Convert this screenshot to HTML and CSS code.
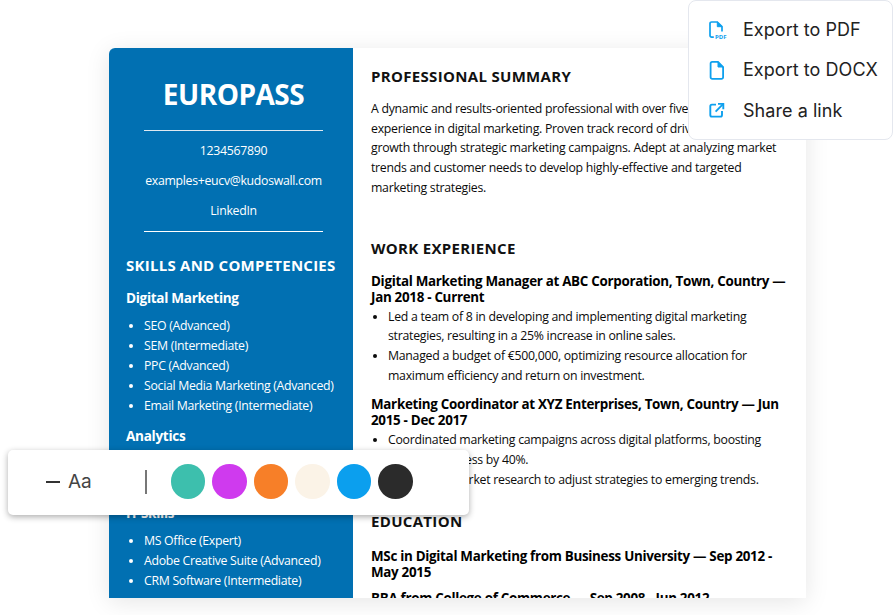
FILE: index.html
```html
<!DOCTYPE html>
<html lang="en">
<head>
<meta charset="utf-8">
<title>Europass CV</title>
<link rel="stylesheet" href="styles.css">
</head>
<body>
<div class="stage">
  <div class="cv">
    <aside class="side">
      <h1 class="name">EUROPASS</h1>
      <div class="contact">
        <p>1234567890</p>
        <p>examples+eucv@kudoswall.com</p>
        <p>LinkedIn</p>
      </div>
      <h2 class="side-title">SKILLS AND COMPETENCIES</h2>
      <h3 class="side-sub">Digital Marketing</h3>
      <ul class="side-list">
        <li>SEO (Advanced)</li>
        <li>SEM (Intermediate)</li>
        <li>PPC (Advanced)</li>
        <li>Social Media Marketing (Advanced)</li>
        <li>Email Marketing (Intermediate)</li>
      </ul>
      <h3 class="side-sub">Analytics</h3>
      <ul class="side-list">
        <li>Google Analytics (Expert)</li>
        <li>Data Analysis (Advanced)</li>
      </ul>
      <h3 class="side-sub">IT Skills</h3>
      <ul class="side-list">
        <li>MS Office (Expert)</li>
        <li>Adobe Creative Suite (Advanced)</li>
        <li>CRM Software (Intermediate)</li>
      </ul>
    </aside>
    <main class="body">
      <h2 class="title">PROFESSIONAL SUMMARY</h2>
      <p class="summary">A dynamic and results-oriented professional with over five years of experience in digital marketing. Proven track record of driving business growth through strategic marketing campaigns. Adept at analyzing market trends and customer needs to develop highly-effective and targeted marketing strategies.</p>
      <h2 class="title work">WORK EXPERIENCE</h2>
      <h3 class="job">Digital Marketing Manager at ABC Corporation, Town, Country — Jan 2018 - Current</h3>
      <ul class="list">
        <li>Led a team of 8 in developing and implementing digital marketing strategies, resulting in a 25% increase in online sales.</li>
        <li>Managed a budget of €500,000, optimizing resource allocation for maximum efficiency and return on investment.</li>
      </ul>
      <h3 class="job">Marketing Coordinator at XYZ Enterprises, Town, Country — Jun 2015 - Dec 2017</h3>
      <ul class="list">
        <li>Coordinated marketing campaigns across digital platforms, boosting brand awareness by 40%.</li>
        <li>Conducted market research to adjust strategies to emerging trends.</li>
      </ul>
      <h2 class="title edu">EDUCATION</h2>
      <h3 class="job">MSc in Digital Marketing from Business University — Sep 2012 - May 2015</h3>
      <h3 class="job">BBA from College of Commerce — Sep 2008 - Jun 2012</h3>
    </main>
  </div>

  <div class="menu">
    <div class="menu-item">
      <svg class="menu-icon" viewBox="0 0 20 20" fill="none" stroke="#0EA0EE" stroke-width="1.7"><path d="M6.8 18.2H4.6A1.6 1.6 0 0 1 3 16.6V4.6A1.6 1.6 0 0 1 4.6 3H10.3L15 7.7V12.4"/><path d="M10.3 3V7.7H15Z" fill="#0EA0EE" stroke-width="1"/><text x="8" y="19.6" class="pdf">PDF</text></svg>
      <span>Export to PDF</span>
    </div>
    <div class="menu-item">
      <svg class="menu-icon" viewBox="0 0 20 20" fill="none" stroke="#0EA0EE" stroke-width="1.8"><path d="M5.2 1.9H11L16.1 7V17.2A1.6 1.6 0 0 1 14.5 18.8H5.2A1.6 1.6 0 0 1 3.6 17.2V3.5A1.6 1.6 0 0 1 5.2 1.9Z"/><path d="M11 1.9V7H16.1Z" fill="#0EA0EE" stroke-width="1"/></svg>
      <span>Export to DOCX</span>
    </div>
    <div class="menu-item">
      <svg class="menu-icon" viewBox="0 0 20 20" fill="none" stroke="#0EA0EE" stroke-width="1.9"><path d="M9 4.6H4.9A1.6 1.6 0 0 0 3.3 6.2V15A1.6 1.6 0 0 0 4.9 16.6H13.4A1.6 1.6 0 0 0 15 15V11"/><path d="M8.6 11.6L16 4.2"/><path d="M11 3.9H16.3V9.2"/></svg>
      <span>Share a link</span>
    </div>
  </div>

  <div class="toolbar">
    <span class="dash"></span>
    <span class="aa">Aa</span>
    <span class="sep"></span>
    <div class="swatches">
      <span class="swatch teal"></span>
      <span class="swatch purple"></span>
      <span class="swatch orange"></span>
      <span class="swatch cream"></span>
      <span class="swatch blue"></span>
      <span class="swatch dark"></span>
    </div>
  </div>
</div>
</body>
</html>
```
FILE: styles.css
```css
* { box-sizing: border-box; }
html, body { margin: 0; padding: 0; background: #fff; }
body { width: 893px; height: 615px; overflow: hidden; font-family: "Open Sans", sans-serif; }
.stage { position: relative; width: 893px; height: 615px; overflow: hidden; }
h1, h2, h3, p, ul { margin: 0; padding: 0; }

.cv {
  position: absolute; left: 109px; top: 48px;
  width: 697px; height: 550px;
  display: flex; overflow: hidden;
  border-radius: 6px 0 0 0;
  background: #fff;
  box-shadow: 0 4px 24px rgba(0,0,0,.1);
}
.side {
  width: 244px; flex: none; height: 100%;
  background: #0170B2; color: #fff;
  padding: 28px 12px 0 17px;
}
.name { font-size: 28px; line-height: 37px; font-weight: 700; letter-spacing: -.5px; text-align: center; color: #fff; }
.contact {
  margin: 17px 18px 0; border-top: 1px solid #dfe9f1; border-bottom: 1px solid #fff;
  height: 102px; text-align: center; font-size: 12.3px; letter-spacing: -.3px;
  padding-top: 10px;
  display: flex; flex-direction: column; gap: 10.5px;
}
.contact p { line-height: 19.5px; }
.side-title { margin-top: 23px; font-size: 15px; line-height: 20px; font-weight: 700; letter-spacing: .25px; white-space: nowrap; }
.side-sub { margin-top: 13px; font-size: 13.6px; line-height: 19px; font-weight: 700; letter-spacing: -.32px; }
.side-list { margin-top: 9px; list-style: disc; padding-left: 18px; font-size: 12.3px; line-height: 20px; letter-spacing: -.3px; }
.side-list + .side-sub { margin-top: 9.5px; }

.body { flex: 1; padding: 18px 16px 0 18px; color: #0b0b0b; font-size: 12.3px; line-height: 19.7px; letter-spacing: -.27px; }
.title { font-size: 15px; line-height: 20px; font-weight: 700; letter-spacing: .32px; color: #111; }
.summary { margin-top: 13px; }
.work { margin-top: 40px; }
.edu { margin-top: 22px; }
.job { font-size: 13.4px; line-height: 16px; font-weight: 700; margin-top: 10px; color: #000; letter-spacing: -.3px; }
.work + .job { margin-top: 15px; }
.list { list-style: disc; padding-left: 17px; margin-top: 2px; }
.list + .job { margin-top: 11px; }
.edu + .job { margin-top: 17px; }

.menu {
  position: absolute; left: 688px; top: 0; width: 205px; height: 140px;
  background: #fff; border: 1px solid #e4e7ee; border-radius: 8px;
  padding: 8px 0 0 18px;
  display: flex; flex-direction: column;
  font-family: Inter, sans-serif; font-size: 18px; letter-spacing: .05px; color: #222;
}
.menu-item { display: flex; align-items: center; gap: 16px; height: 40.5px; }
.menu-icon { width: 20px; height: 20px; flex: none; overflow: visible; }
.pdf { font: 700 6px "Open Sans", sans-serif; fill: #0EA0EE; stroke: none; }

.toolbar {
  position: absolute; left: 8px; top: 450px; width: 461px; height: 65px;
  background: #fff; border-radius: 5px;
  box-shadow: 0 2px 6px rgba(0,0,0,.32);
  display: flex; align-items: center;
  padding: 0 0 2px 38px;
}
.dash { width: 14px; height: 2px; background: #333; flex: none; }
.aa { margin-left: 8px; width: 55px; font-family: Inter, sans-serif; font-size: 19px; color: #444; }
.sep { width: 1.5px; height: 24px; background: #777; margin-left: 22px; flex: none; }
.swatches { display: flex; gap: 7px; margin-left: 24px; }
.swatch { width: 34.6px; height: 34.6px; border-radius: 50%; }
.teal { background: #3DBFAD; }
.purple { background: #CF3AEE; }
.orange { background: #F77F28; }
.cream { background: #FBF3E7; }
.blue { background: #0B9FEE; }
.dark { background: #2B2B2B; }
```
